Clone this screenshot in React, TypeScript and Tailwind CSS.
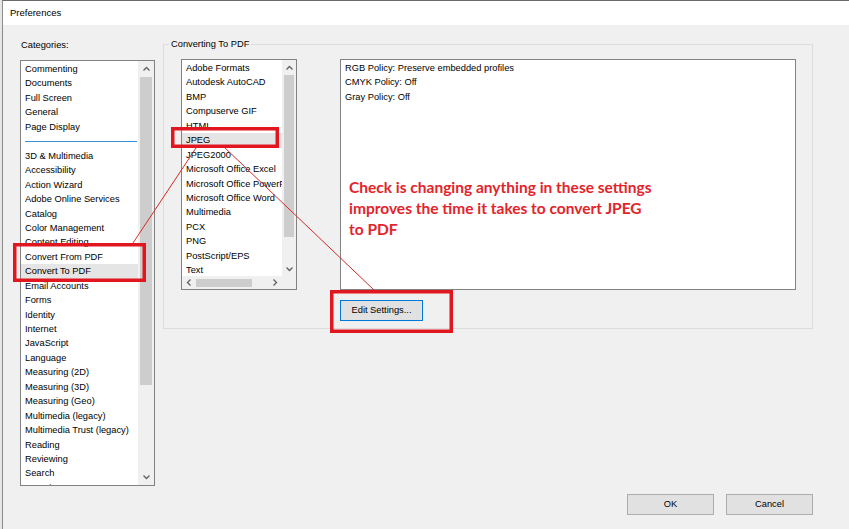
import React from "react";

const TOP_CATEGORIES = ["Commenting", "Documents", "Full Screen", "General", "Page Display"];

const CATEGORIES = [
  "3D & Multimedia",
  "Accessibility",
  "Action Wizard",
  "Adobe Online Services",
  "Catalog",
  "Color Management",
  "Content Editing",
  "Convert From PDF",
  "Convert To PDF",
  "Email Accounts",
  "Forms",
  "Identity",
  "Internet",
  "JavaScript",
  "Language",
  "Measuring (2D)",
  "Measuring (3D)",
  "Measuring (Geo)",
  "Multimedia (legacy)",
  "Multimedia Trust (legacy)",
  "Reading",
  "Reviewing",
  "Search",
  "Security",
];

const FORMATS = [
  "Adobe Formats",
  "Autodesk AutoCAD",
  "BMP",
  "Compuserve GIF",
  "HTML",
  "JPEG",
  "JPEG2000",
  "Microsoft Office Excel",
  "Microsoft Office PowerPoint",
  "Microsoft Office Word",
  "Multimedia",
  "PCX",
  "PNG",
  "PostScript/EPS",
  "Text",
];

const POLICIES = ["RGB Policy: Preserve embedded profiles", "CMYK Policy: Off", "Gray Policy: Off"];

function Chevron({ dir }: { dir: "up" | "down" | "left" | "right" }) {
  const pts = {
    up: "0.5,4.5 3.5,1.5 6.5,4.5",
    down: "0.5,1.5 3.5,4.5 6.5,1.5",
    left: "4.5,0.5 1.5,3.5 4.5,6.5",
    right: "1.5,0.5 4.5,3.5 1.5,6.5",
  }[dir];
  const horiz = dir === "up" || dir === "down";
  return (
    <svg width={horiz ? 7 : 6} height={horiz ? 6 : 7} viewBox={horiz ? "0 0 7 6" : "0 0 6 7"}>
      <polyline points={pts} fill="none" stroke="#606060" strokeWidth="1.3" />
    </svg>
  );
}

function Item({ label, selected }: { label: string; selected?: boolean }) {
  return (
    <div className={"h-[14.45px] leading-[14.45px] pl-[4px] whitespace-nowrap " + (selected ? "bg-[#e5e5e5]" : "")}>
      {label}
    </div>
  );
}

export default function App() {
  return (
    <div className="relative w-[849px] h-[529px] flex bg-[#e6e6e6] overflow-hidden text-[9.3px] text-black [font-family:'Liberation_Sans',Arial,sans-serif]">
      <div className="w-[2px] shrink-0" />
      <div className="flex-1 flex flex-col border-l border-t border-l-[#8c8c8c] border-t-[#6a6a6a]">
        {/* title bar */}
        <div className="h-[24px] bg-white flex items-center pl-[7px] text-[9.5px]">Preferences</div>

        <div className="flex-1 flex bg-[#f0f0f0] pl-[17px]">
          {/* categories */}
          <div className="w-[135px] flex flex-col pt-[13px]">
            <div className="h-[14px] leading-[14px] pl-[1px] mb-[8px]">Categories:</div>
            <div className="h-[426px] flex border border-[#828282] bg-white">
              <div className="flex-1 overflow-hidden pt-[1px]">
                {TOP_CATEGORIES.map((c) => (
                  <Item key={c} label={c} />
                ))}
                <div className="h-[14.6px] flex items-center pl-[4px] pr-[1px]">
                  <div className="w-full h-[1px] bg-[#3a8fd5]" />
                </div>
                {CATEGORIES.map((c) => (
                  <Item key={c} label={c} selected={c === "Convert To PDF"} />
                ))}
              </div>
              <div className="w-[16px] bg-[#f0f0f0] flex flex-col">
                <div className="h-[16px] flex items-center justify-center">
                  <Chevron dir="up" />
                </div>
                <div className="flex-1">
                  <div className="h-[308px] mx-[2px] bg-[#cdcdcd]" />
                </div>
                <div className="h-[16px] flex items-center justify-center">
                  <Chevron dir="down" />
                </div>
              </div>
            </div>
          </div>

          {/* right side */}
          <div className="ml-[8px] w-[650px] flex flex-col">
            <div className="relative mt-[19px] h-[285px] border border-[#dcdcdc] pl-[17px] pt-[14px] flex">
              <span className="absolute -top-[8px] left-[5px] px-[2px] bg-[#f0f0f0] leading-[14px]">Converting To PDF</span>

              {/* formats list */}
              <div className="w-[116px] h-[231px] border border-[#828282] bg-white flex flex-col">
                <div className="flex-1 flex min-h-0">
                  <div className="flex-1 overflow-hidden pt-[1px]">
                    {FORMATS.map((f) => (
                      <Item key={f} label={f} selected={f === "JPEG"} />
                    ))}
                  </div>
                  <div className="w-[14px] bg-[#f0f0f0] flex flex-col">
                    <div className="h-[15px] flex items-center justify-center">
                      <Chevron dir="up" />
                    </div>
                    <div className="flex-1">
                      <div className="h-[162px] mx-[2px] bg-[#cdcdcd]" />
                    </div>
                    <div className="h-[15px] flex items-center justify-center">
                      <Chevron dir="down" />
                    </div>
                  </div>
                </div>
                <div className="h-[13px] flex bg-[#f0f0f0]">
                  <div className="flex-1 flex items-center">
                    <div className="w-[14px] flex justify-center">
                      <Chevron dir="left" />
                    </div>
                    <div className="w-[56px] h-[8px] bg-[#cdcdcd]" />
                    <div className="flex-1" />
                    <div className="w-[14px] flex justify-center">
                      <Chevron dir="right" />
                    </div>
                  </div>
                  <div className="w-[14px]" />
                </div>
              </div>

              {/* info + button */}
              <div className="ml-[43px] flex flex-col">
                <div className="w-[456px] h-[231px] border border-[#828282] bg-white pl-[4px] pt-[1px]">
                  {POLICIES.map((p) => (
                    <div key={p} className="h-[14.4px] leading-[14.4px]">
                      {p}
                    </div>
                  ))}
                  <div className="mt-[73px] ml-[4px] text-[15.5px] leading-[21px] font-bold text-[#e3242b] [font-family:Lato,sans-serif]">
                    <div>Check is changing anything in these settings</div>
                    <div>improves the time it takes to convert JPEG</div>
                    <div>to PDF</div>
                  </div>
                </div>
                <button className="mt-[10px] w-[83px] h-[21px] border border-[#0078d7] bg-[#e1e1e1] flex items-center justify-center">
                  Edit Settings...
                </button>
              </div>
            </div>

            <div className="mt-auto mb-[14px] flex justify-end gap-[12px]">
              <button className="w-[87px] h-[21px] border border-[#adadad] bg-[#e1e1e1]">OK</button>
              <button className="w-[87px] h-[21px] border border-[#adadad] bg-[#e1e1e1]">Cancel</button>
            </div>
          </div>
        </div>
      </div>

      {/* annotation overlay */}
      <svg className="absolute inset-0 pointer-events-none" width="849" height="529" viewBox="0 0 849 529">
        <line x1="196" y1="148" x2="133" y2="243" stroke="#d42a2a" strokeWidth="1" />
        <line x1="224" y1="147" x2="374" y2="290" stroke="#d42a2a" strokeWidth="1" />
        <rect x="172.75" y="128.75" width="104.5" height="17.5" fill="none" stroke="#e1161e" strokeWidth="3.5" />
        <rect x="14.75" y="244.75" width="129.5" height="35.5" fill="none" stroke="#e1161e" strokeWidth="3.5" />
        <rect x="331.75" y="291.75" width="119.5" height="39.5" fill="none" stroke="#e1161e" strokeWidth="3.5" />
      </svg>
    </div>
  );
}
